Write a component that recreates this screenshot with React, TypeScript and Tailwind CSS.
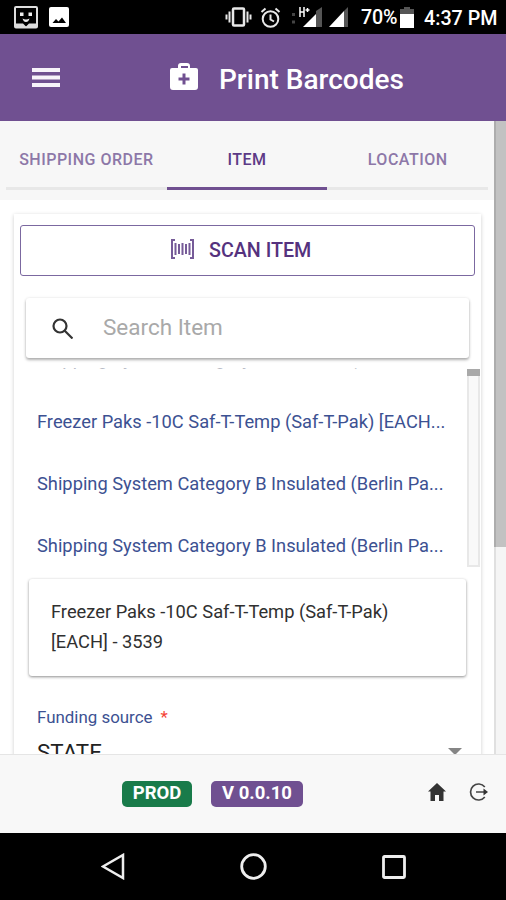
import React from 'react';

const tabs = [
  { name: 'SHIPPING ORDER', active: false },
  { name: 'ITEM', active: true },
  { name: 'LOCATION', active: false },
];

const items = [
  'Shipping System Category B Insulated (Berlin Pa...',
  'Freezer Paks -10C Saf-T-Temp (Saf-T-Pak) [EACH...',
  'Shipping System Category B Insulated (Berlin Pa...',
  'Shipping System Category B Insulated (Berlin Pa...',
];

function StatusBar() {
  return (
    <div className="flex h-[34px] shrink-0 items-center bg-black pl-3.5 text-white">
      <svg className="h-[23px] w-6 shrink-0" viewBox="0 0 24 23">
        <rect x="1" y="1" width="22" height="20.500" rx="1" fill="none" stroke="#ddd" strokeWidth="2" />
        <path d="M2 17.500h7l3 3 3-3h7V21H2z" fill="#ddd" />
        <rect x="6" y="6.500" width="3.500" height="3.500" fill="#eee" />
        <rect x="14.500" y="6.500" width="3.500" height="3.500" fill="#eee" />
        <path d="M8.500 12.500q3.500 2 7 0-1 3.500-3.500 3.500t-3.500-3.500z" fill="#eee" />
      </svg>
      <svg className="ml-[11px] h-5 w-5 shrink-0" viewBox="0 0 20 20">
        <rect width="20" height="20" rx="2" fill="#fff" />
        <path d="M3.500 16l3.500-4 2.500 2.500L13 10.500l4 5.500z" fill="#000" />
      </svg>
      <svg className="ml-[156px] h-5 w-[27px] shrink-0" viewBox="0 0 27 20" fill="none" stroke="#e8e8e8" strokeWidth="2">
        <rect x="8" y="1.500" width="11" height="17" rx="1" strokeWidth="2.500" />
        <path d="M4.500 4.500v11M22.500 4.500v11M1.500 7.500v5M25.500 7.500v5" />
      </svg>
      <svg className="ml-[8px] h-[21px] w-[21px] shrink-0" viewBox="0 0 21 21" fill="none" stroke="#e8e8e8" strokeWidth="2">
        <circle cx="10.500" cy="12" r="7.800" />
        <path d="M10.500 7.500v5l3.500 2M1.500 5L5.500 1.500M19.500 5L15.500 1.500" />
      </svg>
      <svg className="ml-[10px] h-[21px] w-[60px] shrink-0" viewBox="0 0 60 21">
        <path d="M9 0v10M13 0v10M9 5h4M14.500 3h4M16.500 1v4" stroke="#fff" strokeWidth="1.500" />
        <path d="M1 7.500h3M1 15h3" stroke="#444" strokeWidth="3" />
        <path d="M25 4l6-4v20h-6z" fill="#555" />
        <path d="M12 20L25 7v13z" fill="#fff" />
        <path d="M53 4l4-4v20h-4z" fill="#555" />
        <path d="M38 20L53 4v16z" fill="#fff" />
      </svg>
      <span className="ml-[10px] w-[38px] shrink-0 pt-0.5 text-[19.700px] font-medium leading-none tracking-[-0.2px]">70%</span>
      <svg className="ml-[1px] h-[21px] w-[14px] shrink-0" viewBox="0 0 14 21">
        <path d="M4 0h6v2h4v5H0V2h4z" fill="#555" />
        <path d="M0 7h14v14H0z" fill="#fff" />
      </svg>
      <span className="ml-2.5 whitespace-nowrap pt-[3px] text-[19.700px] font-medium leading-none">4:37 PM</span>
    </div>
  );
}

function Header() {
  return (
    <div className="flex h-[87px] shrink-0 items-center bg-[#705091] pl-8 text-white">
      <svg className="h-5 w-7" viewBox="0 0 28 20">
        <path d="M0 2h28M0 9.500h28M0 17h28" stroke="#f7f3fa" strokeWidth="3.800" />
      </svg>
      <svg className="ml-[110px] mt-[-2px] h-[27px] w-7" viewBox="0 0 28 27">
        <path
          fill="#fff"
          fillRule="evenodd"
          d="M8 5V3q0-3 3-3h6q3 0 3 3v2h6q2 0 2 2v17q0 3-3 3H3q-3 0-3-3V7q0-2 2-2zM11 5h7V3h-7zM12.500 10.500v4h-4v3h4v4h3v-4h4v-3h-4v-4z"
        />
      </svg>
      <h1 className="ml-[21px] mt-1 whitespace-nowrap text-[28px] font-medium leading-none">Print Barcodes</h1>
    </div>
  );
}

function Tabs() {
  return (
    <div className="h-[79px] bg-[#f7f7f7] px-1.5">
      <div className="grid h-[69px] grid-cols-3">
        {tabs.map((tab) => (
          <div
            key={tab.name}
            className={`flex items-center justify-center whitespace-nowrap border-b-[3px] pt-[11px] text-base font-medium tracking-[0.500px] ${
              tab.active ? 'border-[#705091] text-[#5d3a86]' : 'border-[#e8e8e8] text-[#8d78a8]'
            }`}
          >
            {tab.name}
          </div>
        ))}
      </div>
    </div>
  );
}

function ItemForm() {
  return (
    <div className="mx-3.5 mt-3.5 h-[640px] w-[467px] bg-white pt-[11px] shadow-[0_1px_4px_rgba(0,0,0,0.2)]">
      <button className="ml-1.5 flex h-[51px] w-[455px] items-center rounded-[3px] border-[1.500px] border-[#7b68a0] pl-[150px] text-[#55327e]">
        <svg className="mt-[-3px] h-5 w-[23px]" viewBox="0 0 23 20" fill="none" stroke="#765b98">
          <path d="M4 1H1v18h3M19 1h3v18h-3" strokeWidth="2" />
          <path d="M4.500 4v12M11.500 4v12M18.500 4v12" strokeWidth="2" />
          <path d="M8 5v10M15 5v10" strokeWidth="2" />
        </svg>
        <span className="ml-[15px] mt-px whitespace-nowrap text-[19.700px] font-medium leading-none">SCAN ITEM</span>
      </button>

      <div className="relative ml-3 mt-[22px] flex h-[60px] w-[443px] items-center rounded-[3px] bg-white pl-[26px] shadow-[0_2px_3px_rgba(0,0,0,0.3),0_0_3px_rgba(0,0,0,0.1)]">
        <svg className="h-[21px] w-[21px]" viewBox="0 0 21 21" fill="none" stroke="#333" strokeWidth="2.200">
          <circle cx="8" cy="8" r="6.500" />
          <path d="M12.500 12.500l8 8" />
        </svg>
        <span className="ml-[30px] mt-[-2px] text-[22.500px] leading-none text-[#a9a9a9]">Search Item</span>
      </div>

      <div className="mt-[10px] flex h-[199px] overflow-hidden">
        <div className="mt-[-39px] w-[453px] pl-[23px]">
          {items.map((item, i) => (
            <div
              key={i}
              className={`flex h-[62px] items-center whitespace-nowrap text-[18.300px] ${
                i === 0 ? 'pb-0.5 text-[#b9bcc6]' : 'text-[#3c5192]'
              }`}
            >
              {item}
            </div>
          ))}
        </div>
        <div className="mt-px h-[198px] w-[13px] border-x-2 border-b-2 border-[#e8e8e8] bg-[#f9f9f9]">
          <div className="mx-[-2px] h-[7px] bg-[#a9a9a9]" />
        </div>
      </div>

      <div className="ml-[15px] mt-3 h-[97px] w-[437px] rounded-[3px] bg-white pl-[22px] pt-[18px] text-[18.300px] leading-[30px] text-[#303030] shadow-[0_1px_3px_rgba(0,0,0,0.45)]">
        <div className="whitespace-nowrap">Freezer Paks -10C Saf-T-Temp (Saf-T-Pak)</div>
        <div>[EACH] - 3539</div>
      </div>

      <div className="ml-[23px] mt-8 flex h-5 items-center text-[16.900px] text-[#3c5192]">
        Funding source <span className="ml-2 text-[#f44336]">*</span>
      </div>
      <div className="ml-[23px] mr-[19px] mt-[13px] flex h-6 items-center justify-between text-[22.300px] text-[#222]">
        <span>STATE</span>
        <svg className="mt-[-3px] h-[7px] w-[14px]" viewBox="0 0 14 7">
          <path d="M0 0h14L7 7z" fill="#858585" />
        </svg>
      </div>
    </div>
  );
}

function Footer() {
  return (
    <div className="flex h-[79px] shrink-0 items-center border-t border-[#e5e5e5] bg-[#f8f8f8] pl-[122px]">
      <span className="flex h-[26px] w-[70px] items-center justify-center rounded-[5px] bg-[#197b4a] text-[18.500px] font-bold text-white">
        PROD
      </span>
      <span className="ml-[19px] flex h-[26px] w-[92px] items-center justify-center whitespace-nowrap rounded-[5px] bg-[#705091] text-[18.500px] font-bold text-white">
        V 0.0.10
      </span>
      <svg className="ml-[125px] mt-[-4px] h-[18px] w-[18px]" viewBox="0 0 18 18">
        <path d="M9 0l9 8.500h-2.500V18H11v-6H7v6H2.500V8.500H0z" fill="#333" />
      </svg>
      <svg className="ml-[23px] mt-[-4px] h-5 w-5" viewBox="0 0 20 20" fill="none" stroke="#444" strokeWidth="1.700">
        <path d="M15.800 5A8 8 0 1 0 15.800 15M7 10h10" />
        <path d="M14.500 6.500L19 10l-4.500 3.500z" fill="#333" stroke="none" />
      </svg>
    </div>
  );
}

function NavBar() {
  return (
    <div className="flex h-[67px] shrink-0 items-center bg-black pl-[101px]">
      <svg className="h-[27px] w-6" viewBox="0 0 24 27" fill="none" stroke="#eee" strokeWidth="2.500">
        <path d="M22 2v23L2 13.500z" />
      </svg>
      <svg className="ml-[115px] h-[27px] w-[27px]" viewBox="0 0 27 27" fill="none" stroke="#eee" strokeWidth="2.800">
        <circle cx="13.500" cy="13.500" r="11.800" />
      </svg>
      <svg className="ml-[115px] h-6 w-6" viewBox="0 0 24 24" fill="none" stroke="#eee" strokeWidth="2.800">
        <rect x="1.500" y="1.500" width="21" height="21" rx="1" />
      </svg>
    </div>
  );
}

export default function App() {
  return (
    <div className="flex h-[900px] w-[506px] flex-col overflow-hidden bg-white font-[Roboto,sans-serif]">
      <StatusBar />
      <Header />
      <div className="flex h-[633px] shrink-0 overflow-hidden">
        <div className="w-[494px]">
          <Tabs />
          <ItemForm />
        </div>
        <div className="w-3 border-l-2 border-[#e0e0e0] bg-[#f5f5f5]">
          <div className="ml-[-2px] h-[426px] border-l-2 border-[#adadad] bg-[#c2c2c2]" />
        </div>
      </div>
      <Footer />
      <NavBar />
    </div>
  );
}
